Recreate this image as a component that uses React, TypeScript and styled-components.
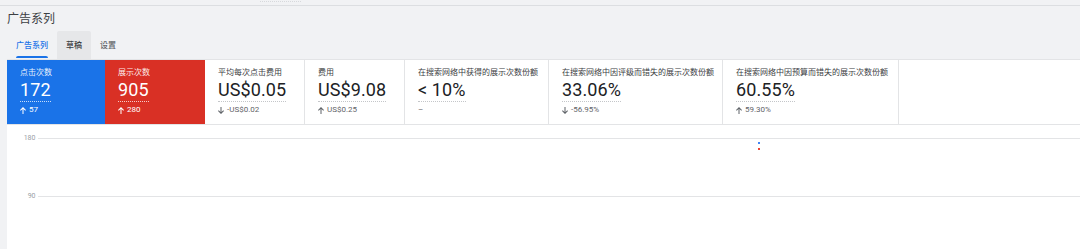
import React from "react";
import styled, { createGlobalStyle } from "styled-components";

const Global = createGlobalStyle`
  html, body { margin: 0; padding: 0; background: #f1f2f4; }
  body { font-family: Roboto, "Noto Sans CJK SC", sans-serif; width: 1080px; height: 249px; overflow: hidden; }
`;

const Page = styled.div`
  display: flex;
  flex-direction: column;
  width: 1080px;
  height: 249px;
`;

const TopBar = styled.div`
  height: 5px;
  border-bottom: 1px solid #dcdee1;
  display: flex;
  padding-left: 260px;
`;

const Dots = styled.div`
  width: 41px;
  height: 1px;
  border-bottom: 1px dotted #d7d9dc;
`;

const Title = styled.h1`
  margin: 4px 0 0 7px;
  font: 400 12px/16px "Noto Sans CJK SC", sans-serif;
  color: #3c4043;
  height: 21px;
`;

const Tabs = styled.div`
  display: flex;
  height: 28px;
  padding-left: 7px;
`;

const Tab = styled.div<{ $active?: boolean; $hover?: boolean }>`
  position: relative;
  display: flex;
  align-items: center;
  padding: 0 9px;
  font: 500 8px/10px "Noto Sans CJK SC", sans-serif;
  color: ${(p) => (p.$active ? "#1a73e8" : p.$hover ? "#3c4043" : "#5f6368")};
  background: ${(p) => (p.$hover ? "#e6e7e9" : "transparent")};
  border-radius: 2px 2px 0 0;
  &::after {
    content: "";
    display: ${(p) => (p.$active ? "block" : "none")};
    position: absolute;
    left: 9px;
    right: 9px;
    bottom: 1px;
    height: 2px;
    border-radius: 2px 2px 0 0;
    background: #1a73e8;
  }
`;

const Panel = styled.div`
  flex: 1;
  margin-left: 7px;
  background: #fff;
  display: flex;
  flex-direction: column;
`;

const Cards = styled.div`
  display: flex;
  height: 64px;
  border-top: 1px solid #e3e4e6;
  border-bottom: 1px solid #e3e4e6;
`;

const Card = styled.div<{ $w: number; $bg?: string }>`
  width: ${(p) => p.$w}px;
  box-sizing: border-box;
  flex: none;
  padding: 7px 0 0 13px;
  background: ${(p) => p.$bg || "#fff"};
  border-right: 1px solid ${(p) => (p.$bg ? "transparent" : "#e3e4e6")};
  display: flex;
  flex-direction: column;
  align-items: flex-start;
  color: ${(p) => (p.$bg ? "#fff" : "#202124")};
`;

const Label = styled.div<{ $light?: boolean }>`
  font: 400 8px/10px "Noto Sans CJK SC", sans-serif;
  color: ${(p) => (p.$light ? "rgba(255,255,255,0.92)" : "#3c4043")};
  white-space: nowrap;
`;

const Value = styled.div<{ $light?: boolean }>`
  margin-top: 3px;
  font: 400 18px/20px Roboto, sans-serif;
  letter-spacing: 0.1px;
  padding-bottom: 1px;
  border-bottom: 1px dotted ${(p) => (p.$light ? "rgba(255,255,255,0.75)" : "#c4c6c9")};
`;

const Delta = styled.div<{ $light?: boolean }>`
  margin-top: 3px;
  display: flex;
  align-items: center;
  gap: 3px;
  font: 400 8px/10px Roboto, sans-serif;
  color: ${(p) => (p.$light ? "#fff" : "#5f6368")};
`;

const ChartArea = styled.div`
  position: relative;
  flex: 1;
  display: flex;
  flex-direction: column;
  padding-top: 9px;
  gap: 50px;
`;

const GridRow = styled.div`
  display: flex;
  align-items: center;
  height: 8px;
`;

const Tick = styled.span`
  width: 28.5px;
  text-align: right;
  padding-right: 2.5px;
  font: 400 7px/8px Roboto, sans-serif;
  color: #9aa0a6;
`;

const GridLine = styled.div`
  flex: 1;
  height: 1px;
  background: #e3e4e6;
`;

const Point = styled.div<{ $c: string; $top: number }>`
  position: absolute;
  left: 751px;
  top: ${(p) => p.$top}px;
  width: 2px;
  height: 2px;
  background: ${(p) => p.$c};
`;

const Arrow = ({ down, color }: { down?: boolean; color: string }) => (
  <svg width="6" height="7" viewBox="0 0 12 14" style={{ transform: down ? "rotate(180deg)" : undefined }}>
    <path d="M6 0 L12 6 L10.6 7.4 L7 3.8 V14 H5 V3.8 L1.4 7.4 L0 6 Z" fill={color} />
  </svg>
);

type M = { label: string; value: string; delta?: string; dir?: "up" | "down"; w: number; bg?: string };

const metrics: M[] = [
  { label: "点击次数", value: "172", delta: "57", dir: "up", w: 98, bg: "#1a73e8" },
  { label: "展示次数", value: "905", delta: "280", dir: "up", w: 100, bg: "#d93025" },
  { label: "平均每次点击费用", value: "US$0.05", delta: "-US$0.02", dir: "down", w: 100 },
  { label: "费用", value: "US$9.08", delta: "US$0.25", dir: "up", w: 100 },
  { label: "在搜索网络中获得的展示次数份额", value: "< 10%", w: 144 },
  { label: "在搜索网络中因评级而错失的展示次数份额", value: "33.06%", delta: "-56.95%", dir: "down", w: 174 },
  { label: "在搜索网络中因预算而错失的展示次数份额", value: "60.55%", delta: "59.30%", dir: "up", w: 176 },
];

export default function App() {
  return (
    <Page>
      <Global />
      <TopBar>
        <Dots />
      </TopBar>
      <Title>广告系列</Title>
      <Tabs>
        <Tab $active>广告系列</Tab>
        <Tab $hover>草稿</Tab>
        <Tab>设置</Tab>
      </Tabs>
      <Panel>
        <Cards>
          {metrics.map((m) => {
            const light = !!m.bg;
            return (
              <Card key={m.label} $w={m.w} $bg={m.bg}>
                <Label $light={light}>{m.label}</Label>
                <Value $light={light}>{m.value}</Value>
                <Delta $light={light}>
                  {m.delta ? (
                    <>
                      <Arrow down={m.dir === "down"} color={light ? "#fff" : "#5f6368"} />
                      {m.delta}
                    </>
                  ) : (
                    "–"
                  )}
                </Delta>
              </Card>
            );
          })}
        </Cards>
        <ChartArea>
          <GridRow>
            <Tick>180</Tick>
            <GridLine />
          </GridRow>
          <GridRow>
            <Tick>90</Tick>
            <GridLine />
          </GridRow>
          <Point $c="#4285f4" $top={17} />
          <Point $c="#ea4335" $top={23} />
        </ChartArea>
      </Panel>
    </Page>
  );
}
